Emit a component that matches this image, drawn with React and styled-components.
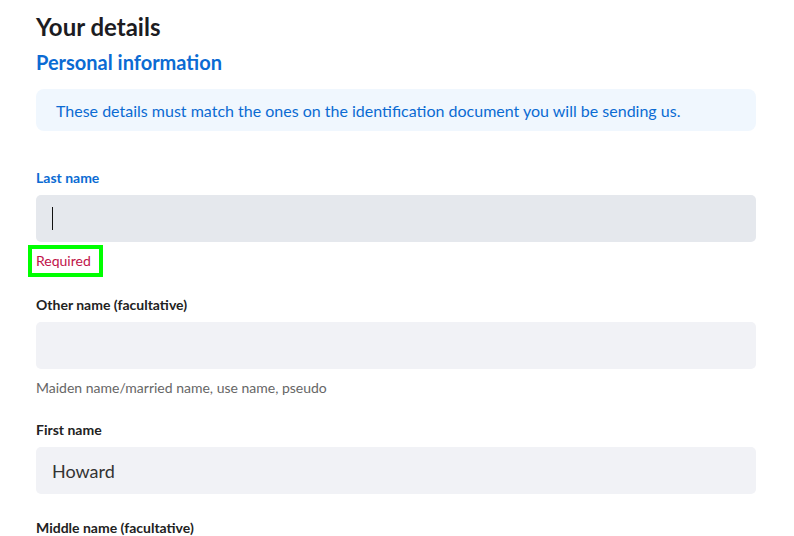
import styled, { createGlobalStyle } from 'styled-components';

const GlobalStyle = createGlobalStyle`
  body {
    margin: 0;
    background: #fff;
    font-family: Lato, "Open Sans", sans-serif;
  }
`;

const Page = styled.div`
  padding: 11px 38px 0 36px;
  display: flex;
  flex-direction: column;
`;

const Title = styled.h1`
  margin: 0;
  font-size: 24px;
  line-height: 32px;
  font-weight: 700;
  color: #1c1c22;
`;

const Subtitle = styled.h2`
  margin: 6px 0 0;
  font-size: 20px;
  line-height: 26px;
  font-weight: 700;
  color: #0b6bd3;
`;

const Notice = styled.div`
  margin-top: 14px;
  height: 42px;
  display: flex;
  align-items: center;
  padding: 0 20px;
  background: #f0f7fe;
  border-radius: 8px;
  font-size: 16px;
  color: #0b6bd3;
`;

const Field = styled.div`
  display: flex;
  flex-direction: column;
  margin-top: ${({ gap }) => gap || 25}px;
`;

const Label = styled.label`
  font-size: 14px;
  line-height: 18px;
  font-weight: 700;
  color: ${({ active }) => (active ? '#0b6bd3' : '#222')};
  margin-bottom: 8px;
`;

const Input = styled.div`
  height: 47px;
  display: flex;
  align-items: center;
  padding: 0 16px;
  border-radius: 5px;
  background: ${({ focused }) => (focused ? '#e5e8ed' : '#f1f2f6')};
  font-size: 18px;
  color: #333;
`;

const Caret = styled.span`
  width: 1px;
  height: 23px;
  background: #111;
`;

const Hint = styled.div`
  margin-top: 10px;
  font-size: 14px;
  line-height: 18px;
  color: #666;
`;

const Highlight = styled.div`
  margin: 3px 0 0 -8px;
  align-self: flex-start;
  border: 4px solid #00ff00;
  padding: 3px 8px 3px 4px;
  font-size: 14px;
  line-height: 18px;
  color: #c0134a;
`;

export default function App() {
  return (
    <>
      <GlobalStyle />
      <Page>
        <Title>Your details</Title>
        <Subtitle>Personal information</Subtitle>
        <Notice>These details must match the ones on the identification document you will be sending us.</Notice>

        <Field gap={38}>
          <Label active>Last name</Label>
          <Input focused>
            <Caret />
          </Input>
          <Highlight>Required</Highlight>
        </Field>

        <Field gap={19}>
          <Label>Other name (facultative)</Label>
          <Input />
          <Hint>Maiden name/married name, use name, pseudo</Hint>
        </Field>

        <Field gap={24}>
          <Label>First name</Label>
          <Input>Howard</Input>
        </Field>

        <Field>
          <Label>Middle name (facultative)</Label>
          <Input />
        </Field>
      </Page>
    </>
  );
}
